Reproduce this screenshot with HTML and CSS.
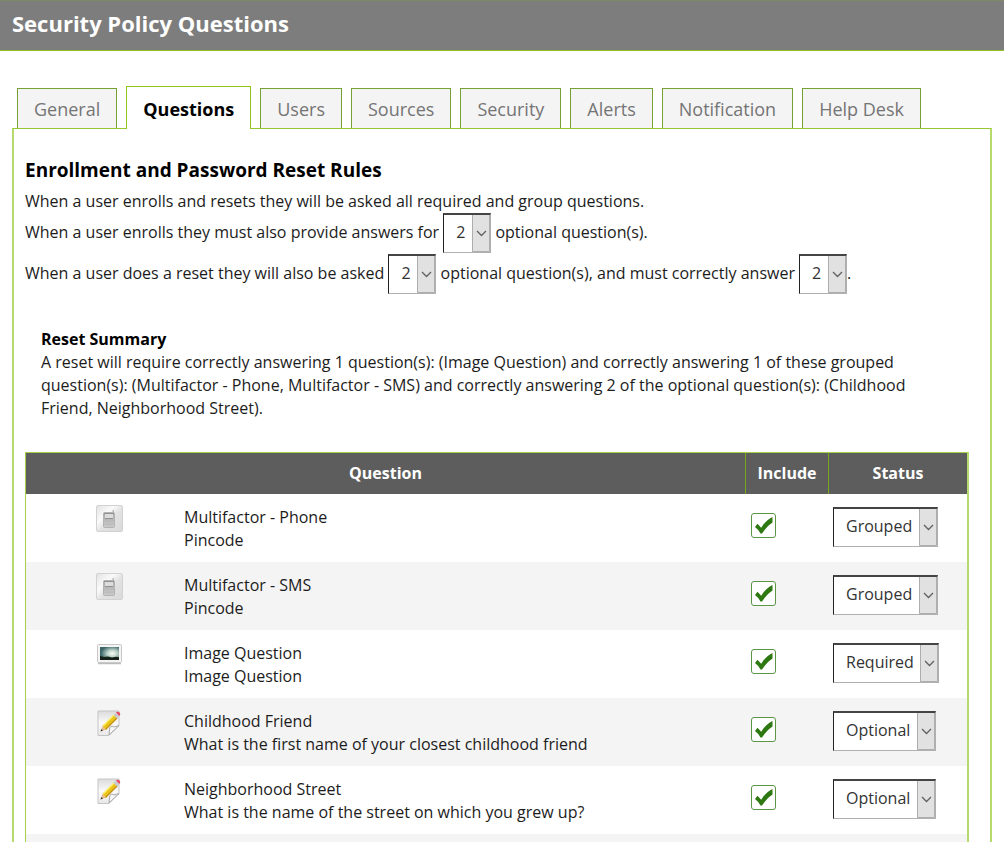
FILE: index.html
```html
<!DOCTYPE html>
<html lang="en">
<head>
<meta charset="utf-8">
<title>Security Policy Questions</title>
<link rel="stylesheet" href="styles.css">
</head>
<body>
<svg class="defs" width="0" height="0" aria-hidden="true">
  <defs>
    <linearGradient id="tile" x1="0" y1="0" x2="1" y2="1"><stop offset="0" stop-color="#e2e2e2"/><stop offset=".35" stop-color="#fafafa"/><stop offset=".55" stop-color="#e2e2e2"/><stop offset="1" stop-color="#d9d9d9"/></linearGradient>
    <linearGradient id="body" x1="0" y1="0" x2="0" y2="1"><stop offset="0" stop-color="#a8a8a8"/><stop offset="1" stop-color="#cacaca"/></linearGradient>
    <radialGradient id="sky" cx=".65" cy=".5" r=".6"><stop offset="0" stop-color="#fbfff4"/><stop offset=".45" stop-color="#b9d0c8"/><stop offset="1" stop-color="#3d6668"/></radialGradient>
    <linearGradient id="paper" x1="0" y1="0" x2="0" y2="1"><stop offset="0" stop-color="#dcdcdc"/><stop offset=".5" stop-color="#fafafa"/><stop offset="1" stop-color="#e8e8e8"/></linearGradient>
    <symbol id="phone" viewBox="0 0 27 27">
      <rect x=".5" y=".5" width="26" height="26" rx="1.5" fill="url(#tile)" stroke="#d2d2d2"/>
      <path d="M16.500 5h1.500v3h-1.500z" fill="#bbb"/>
      <rect x="7.500" y="7.500" width="11" height="15" rx="1" fill="url(#body)" stroke="#b3b3b3"/>
      <path d="M9 9h8v4H9z" fill="#dcdcdc"/>
      <path d="M8 8.500h10M9 13.500h8" stroke="#929292"/>
      <path d="M9 16.500h8M9 19.500h8" stroke="#bcbcbc"/>
    </symbol>
    <symbol id="image" viewBox="0 0 27 27">
      <path d="M2 22.500h23" stroke="#bbb" stroke-width="1.500"/>
      <rect x="1.500" y="3.500" width="24" height="18" rx="1" fill="#f4f4f4" stroke="#c8c8c8"/>
      <path d="M4 6h19v13H4z" fill="url(#sky)"/>
      <path d="M4 15l4 1 4-.5 4 1 4-.8 3 .5V19H4z" fill="#152018"/>
    </symbol>
    <symbol id="note" viewBox="0 0 27 27">
      <path d="M2 2h21v14.500L13 26.500H2z" fill="url(#paper)" stroke="#c5c5c5"/>
      <path d="M13 26l.8-7.500 2.200-1.500 2 1 5-1.500z" fill="#f7f7f7" stroke="#aaa"/>
      <path d="M4.500 22.500l2-5.500 3.500 3.500z" fill="#e5bc91"/>
      <path d="M4.500 22.500l1-2.400 1.500 1.500z" fill="#333"/>
      <path d="M6.500 17L18 5.500 21.500 9 10 20.500z" fill="#e9c51c"/>
      <path d="M7.500 16.500L18.500 5.500" stroke="#fff06a" stroke-width="1.300"/>
      <path d="M9.500 20.500L21 9" stroke="#c28d12" stroke-width="1.200"/>
      <path d="M17.500 6l2.500-2.500L23.500 7 21 9.500z" fill="#c9c9d2"/>
      <path d="M20 3.500q1.800-1.500 3.500 0 1.600 1.800 0 3.500z" fill="#e9485a"/>
    </symbol>
  </defs>
</svg>

<header class="page-header"><h1>Security Policy Questions</h1></header>

<main class="page">
  <nav class="tabs" aria-label="Policy sections">
    <button type="button" class="tab">General</button>
    <button type="button" class="tab tab-active" aria-current="page">Questions</button>
    <button type="button" class="tab">Users</button>
    <button type="button" class="tab">Sources</button>
    <button type="button" class="tab">Security</button>
    <button type="button" class="tab">Alerts</button>
    <button type="button" class="tab">Notification</button>
    <button type="button" class="tab">Help Desk</button>
  </nav>

  <section class="panel">
    <h2>Enrollment and Password Reset Rules</h2>
    <p>When a user enrolls and resets they will be asked all required and group questions.</p>
    <p class="rule"><label for="enroll">When a user enrolls they must also provide answers for</label> <select id="enroll" class="select"><option>2</option></select> optional question(s).</p>
    <p class="rule"><label for="ask">When a user does a reset they will also be asked</label> <select id="ask" class="select"><option>2</option></select> optional question(s), <label for="correct">and must correctly answer</label> <select id="correct" class="select"><option>2</option></select>.</p>

    <div class="summary">
      <h3>Reset Summary</h3>
      <p>A reset will require correctly answering 1 question(s): (Image Question) and correctly answering 1 of these grouped question(s): (Multifactor - Phone, Multifactor - SMS) and correctly answering 2 of the optional question(s): (Childhood Friend, Neighborhood Street).</p>
    </div>

    <table class="questions">
      <colgroup><col class="col-icon"><col><col class="col-include"><col class="col-status"></colgroup>
      <thead>
        <tr><th colspan="2">Question</th><th>Include</th><th>Status</th></tr>
      </thead>
      <tbody>
        <tr>
          <td class="cell-icon"><svg class="icon" aria-hidden="true"><use href="#phone"/></svg></td>
          <td class="cell-text">Multifactor - Phone<br>Pincode</td>
          <td class="cell-include"><input type="checkbox" class="check" checked aria-label="Include Multifactor - Phone"></td>
          <td class="cell-status"><select class="select" aria-label="Status of Multifactor - Phone"><option>Grouped</option></select></td>
        </tr>
        <tr>
          <td class="cell-icon"><svg class="icon" aria-hidden="true"><use href="#phone"/></svg></td>
          <td class="cell-text">Multifactor - SMS<br>Pincode</td>
          <td class="cell-include"><input type="checkbox" class="check" checked aria-label="Include Multifactor - SMS"></td>
          <td class="cell-status"><select class="select" aria-label="Status of Multifactor - SMS"><option>Grouped</option></select></td>
        </tr>
        <tr>
          <td class="cell-icon"><svg class="icon" aria-hidden="true"><use href="#image"/></svg></td>
          <td class="cell-text">Image Question<br>Image Question</td>
          <td class="cell-include"><input type="checkbox" class="check" checked aria-label="Include Image Question"></td>
          <td class="cell-status"><select class="select" aria-label="Status of Image Question"><option>Required</option></select></td>
        </tr>
        <tr>
          <td class="cell-icon"><svg class="icon" aria-hidden="true"><use href="#note"/></svg></td>
          <td class="cell-text">Childhood Friend<br>What is the first name of your closest childhood friend</td>
          <td class="cell-include"><input type="checkbox" class="check" checked aria-label="Include Childhood Friend"></td>
          <td class="cell-status"><select class="select" aria-label="Status of Childhood Friend"><option>Optional</option></select></td>
        </tr>
        <tr>
          <td class="cell-icon"><svg class="icon" aria-hidden="true"><use href="#note"/></svg></td>
          <td class="cell-text">Neighborhood Street<br>What is the name of the street on which you grew up?</td>
          <td class="cell-include"><input type="checkbox" class="check" checked aria-label="Include Neighborhood Street"></td>
          <td class="cell-status"><select class="select" aria-label="Status of Neighborhood Street"><option>Optional</option></select></td>
        </tr>
        <tr class="row-blank"><td colspan="4"></td></tr>
      </tbody>
    </table>
  </section>
</main>
</body>
</html>
```

FILE: styles.css
```css
* { box-sizing: border-box; }

body {
  margin: 0;
  height: 100vh;
  overflow: hidden;
  background: #fff;
  color: #1c1c1c;
  font: 16px/23px "Open Sans", "Noto Sans", sans-serif;
}

h1, h2, h3, p { margin: 0; }

.defs { position: absolute; }

.page-header {
  padding: 7px 12px 12px;
  background: #7d7d7d;
  border-top: 1px solid #7d8a66;
  border-bottom: 1px solid #8fc31f;
  color: #fff;
}

.page-header h1 { font-size: 22px; line-height: 30px; }

.page { padding: 35px 12px 0; }

.tabs {
  display: flex;
  align-items: flex-end;
  gap: 9px;
  padding-left: 5px;
}

.tab {
  height: 40px;
  padding: 2px 16px 0;
  border: 1px solid #76a136;
  border-bottom: 0;
  background: #f4f4f4;
  color: #757575;
  font: inherit;
  font-size: 18px;
}

.tab-active {
  z-index: 1;
  height: 43px;
  margin-bottom: -1px;
  border-color: #8fc31f;
  background: #fff;
  color: #000;
  font-weight: 700;
}

.panel {
  padding: 26px 21px 0 11px;
  border: solid #b6da6c;
  border-width: 1px 2px 0;
  border-top-color: #97c832;
}

.panel h2 {
  margin-bottom: 5px;
  color: #000;
  font-size: 19px;
  line-height: 30px;
}

.select {
  height: 40px;
  padding: 0 24px 2px 12px;
  appearance: none;
  border: 1px solid #b0b0b0;
  border-top: 2px solid #444;
  border-left-color: #222;
  border-radius: 0;
  background:
    url("data:image/svg+xml,%3Csvg xmlns='http://www.w3.org/2000/svg' width='18' height='37'%3E%3Cpath d='M0 0h18v37H0z' fill='%23e1e1e1'/%3E%3Cpath d='M.5 0v36.500h17V0' fill='none' stroke='%23adadad'/%3E%3Cpath d='M5 16l4.500 4.500L14 16' fill='none' stroke='%23606060' stroke-width='1.300'/%3E%3C/svg%3E")
    right center / 18px 37px no-repeat #fff;
  color: #333;
  font: inherit;
}

.rule .select { margin-bottom: 1px; }

.summary { padding: 33px 16px 0; }

.summary h3 {
  color: #000;
  font-size: 16px;
  line-height: 23px;
}

.questions {
  width: 100%;
  margin-top: 32px;
  table-layout: fixed;
  border: 1px solid #a5d04c;
  border-right: 2px solid #b6da6c;
  border-spacing: 0;
}

.col-icon { width: 158px; }
.col-include { width: 83px; }
.col-status { width: 139px; }

.questions th {
  height: 41px;
  padding: 0;
  background: #5d5d5d;
  color: #fff;
}

.questions th + th { border-left: 1px solid #76a51e; }

.questions td {
  height: 68px;
  padding: 12px 0 10px;
  vertical-align: top;
}

.questions tbody tr:nth-child(even) { background: #f4f4f4; }

.questions .cell-icon { padding: 11px 0 0 70px; }
.questions .cell-include { padding: 19px 0 0 6px; }
.questions .cell-status { padding: 13px 0 0 5px; }

.cell-status .select { display: block; }

.icon {
  display: block;
  width: 27px;
  height: 27px;
}

.check {
  display: block;
  width: 25px;
  height: 25px;
  margin: 0;
  appearance: none;
  border: 1px solid #5b9645;
  border-radius: 3px;
  background:
    url("data:image/svg+xml,%3Csvg xmlns='http://www.w3.org/2000/svg' width='23' height='23'%3E%3Cpath d='M3 13l2.500-3.300 3.700 4.100Q13.500 6.500 20.500 3v5.500Q14.500 12.500 10 19.500H8.500Q6.500 15.500 3 13z' fill='%232d7810'/%3E%3C/svg%3E")
    center / 23px 23px no-repeat #fff;
}
```
